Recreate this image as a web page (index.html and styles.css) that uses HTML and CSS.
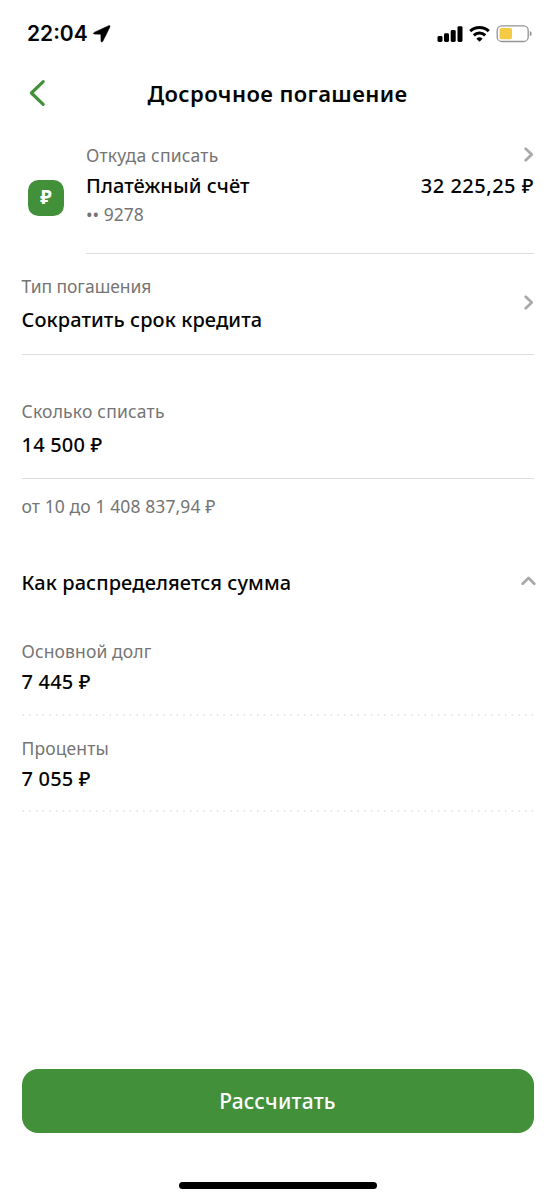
FILE: index.html
```html
<!DOCTYPE html>
<html lang="ru">
<head>
<meta charset="utf-8">
<title>Досрочное погашение</title>
<link rel="stylesheet" href="styles.css">
</head>
<body>
<main class="screen">
  <div class="status">
    <span class="time">22:04</span>
    <svg class="location" width="18" height="18" viewBox="0 0 18 18"><path d="M15.7.7 1.2 7.4C.2 7.9.4 9.1 1.4 9.1l6.5.1.1 6.7c0 1.2 1.3 1.3 1.8.3L16.9 1.9c.4-.8-.4-1.6-1.2-1.2Z" stroke="#000" stroke-width=".6"/></svg>
    <svg class="signals" width="96" height="20" viewBox="0 0 96 20">
      <rect x=".5" y="11" width="5" height="6" rx="1.4"/><rect x="7" y="8.2" width="5" height="8.8" rx="1.4"/><rect x="13.7" y="5" width="5" height="12" rx="1.4"/><rect x="20.5" y="1.2" width="5" height="15.8" rx="1.4"/>
      <g fill="none" stroke="#000" stroke-width="3"><path d="M33.2 6.2a13.5 13.5 0 0 1 18.6 0"/><path d="M36.8 10.3a8.4 8.4 0 0 1 11.4 0"/></g>
      <path d="M42.5 16.8 39.4 13.7a4.6 4.6 0 0 1 6.2 0Z"/>
      <rect x="60.2" y=".8" width="31" height="15.7" rx="4.6" fill="#fff" stroke="#949494" stroke-width="1.3"/>
      <rect x="62.5" y="3" width="12.5" height="11.3" rx="1.8" fill="#f5cb45"/>
      <path d="M92.8 6.1c2.5.7 2.5 4.5 0 5.2Z" fill="#949494"/>
    </svg>
  </div>
  <header class="header">
    <svg class="back" width="18" height="28" viewBox="0 0 18 28"><path d="M14.2 2.7 2.4 14l11.8 11.3"/></svg>
    <h1 class="title">Досрочное погашение</h1>
  </header>
  <section class="account">
    <div class="badge">₽</div>
    <div class="account-body">
      <div class="row top"><span class="label w-from">Откуда списать</span><svg class="chevron" width="10" height="15" viewBox="0 0 10 15"><path d="m1.7 1.7 6 5.8-6 5.8"/></svg></div>
      <div class="row"><span class="value w-account">Платёжный счёт</span><span class="value w-balance">32 225,25 ₽</span></div>
      <div class="label number">•• 9278</div>
    </div>
  </section>
  <section class="field type">
    <div><div class="label w-type">Тип погашения</div><div class="value w-term">Сократить срок кредита</div></div>
    <svg class="chevron" width="10" height="15" viewBox="0 0 10 15"><path d="m1.7 1.7 6 5.8-6 5.8"/></svg>
  </section>
  <section class="field amount">
    <div><div class="label w-much">Сколько списать</div><div class="value w-sum">14 500 ₽</div></div>
  </section>
  <div class="label hint">от 10 до 1 408 837,94 ₽</div>
  <section class="split">
    <h2 class="value w-split">Как распределяется сумма</h2>
    <svg class="chevron up" width="15" height="10" viewBox="0 0 15 10"><path d="M1.7 7.8 7.5 2l5.8 5.8"/></svg>
  </section>
  <section class="part">
    <div class="label w-debt">Основной долг</div><div class="value w-sum">7 445 ₽</div>
    <svg class="dots" width="512" height="2"><path d="M.5 1H512"/></svg>
  </section>
  <section class="part">
    <div class="label w-interest">Проценты</div><div class="value w-sum">7 055 ₽</div>
    <svg class="dots" width="512" height="2"><path d="M.5 1H512"/></svg>
  </section>
  <footer class="footer">
    <button class="submit">Рассчитать</button>
    <div class="home"></div>
  </footer>
</main>
</body>
</html>
```
FILE: styles.css
```css
* { box-sizing: border-box; }
body { margin: 0; background: #fff; }
.screen {
  display: flex; flex-direction: column;
  width: 555px; height: 1200px; padding: 0 21.5px;
  font-family: "Noto Sans", sans-serif; color: #050505; background: #fff;
}
svg { display: block; flex: none; }
.status { display: flex; height: 66px; padding: 21px 1px 0 5.5px; }
.time { font: 600 21px/26px Inter, sans-serif; letter-spacing: 0; }
.location { margin: 4px 0 0 5px; }
.signals { margin: 4px 0 0 auto; }
.header { display: grid; grid-template-columns: 30px 1fr 30px; height: 77px; padding-top: 13px; }
.back { margin-left: 7px; fill: none; stroke: #43903b; stroke-width: 3.2; stroke-linecap: round; stroke-linejoin: round; }
.title { margin: -1px 0 0; font-size: 22px; font-weight: 600; line-height: 30px; letter-spacing: 0.42px; text-align: center; white-space: nowrap; }
.label { font-size: 17.5px; line-height: 24px; color: #757575; white-space: nowrap; }
.value { margin: 0; padding-top: 1px; font-size: 20px; font-weight: 500; line-height: 24px; white-space: nowrap; }
.account { display: flex; height: 111px; }
.badge {
  width: 36px; height: 36px; margin: 37px 22px 0 6.5px; border-radius: 10.5px;
  background: #43903b; color: #fff; font-size: 19px; font-weight: 700; line-height: 34px; text-align: center;
}
.account-body { flex: 1; border-bottom: 1.5px solid #dedede; }
.number { padding-top: 1px; }
.row { display: flex; justify-content: space-between; height: 28px; }
.row.top { height: 30px; }
.w-from, .w-much { letter-spacing: 0.2px; }
.w-account { letter-spacing: 0.06px; }
.w-balance { margin-right: -0.5px; letter-spacing: 0.5px; }
.w-type { letter-spacing: -0.06px; }
.w-term, .w-split { letter-spacing: 0.09px; }
.w-sum { letter-spacing: 0.2px; }
.w-debt, .w-interest { letter-spacing: 0.12px; }
.chevron { fill: none; stroke: #a9a9a9; stroke-width: 2.7; stroke-linecap: round; stroke-linejoin: round; }
.top .chevron { margin-top: 4px; }
.field { display: flex; justify-content: space-between; border-bottom: 1.5px solid #dedede; }
.type { height: 101px; padding-top: 20px; }
.type .chevron { margin-top: 21px; }
.field .label { height: 33px; }
.amount { height: 124px; padding-top: 44px; }
.hint { height: 91px; padding-top: 15px; letter-spacing: 0.1px; }
.split { display: flex; justify-content: space-between; height: 69px; }
.up { margin: 6px -2px 0 0; }
.part { height: 96.5px; }
.part .label { height: 30px; }
.dots { margin-top: 19.5px; stroke: #cfcfcf; stroke-width: 1.2; stroke-dasharray: 1.5 5.2; }
.footer { margin-top: auto; height: 131px; }
.submit {
  display: block; width: 100%; height: 64px; padding: 0; border: 0; border-radius: 16px;
  background: #43903b; color: #fff; font: 500 21px/64px "Noto Sans", sans-serif; letter-spacing: 0.2px; text-align: center;
}
.home { width: 198px; height: 7px; margin: 49px auto 0; border-radius: 4px; background: #000; }
```
